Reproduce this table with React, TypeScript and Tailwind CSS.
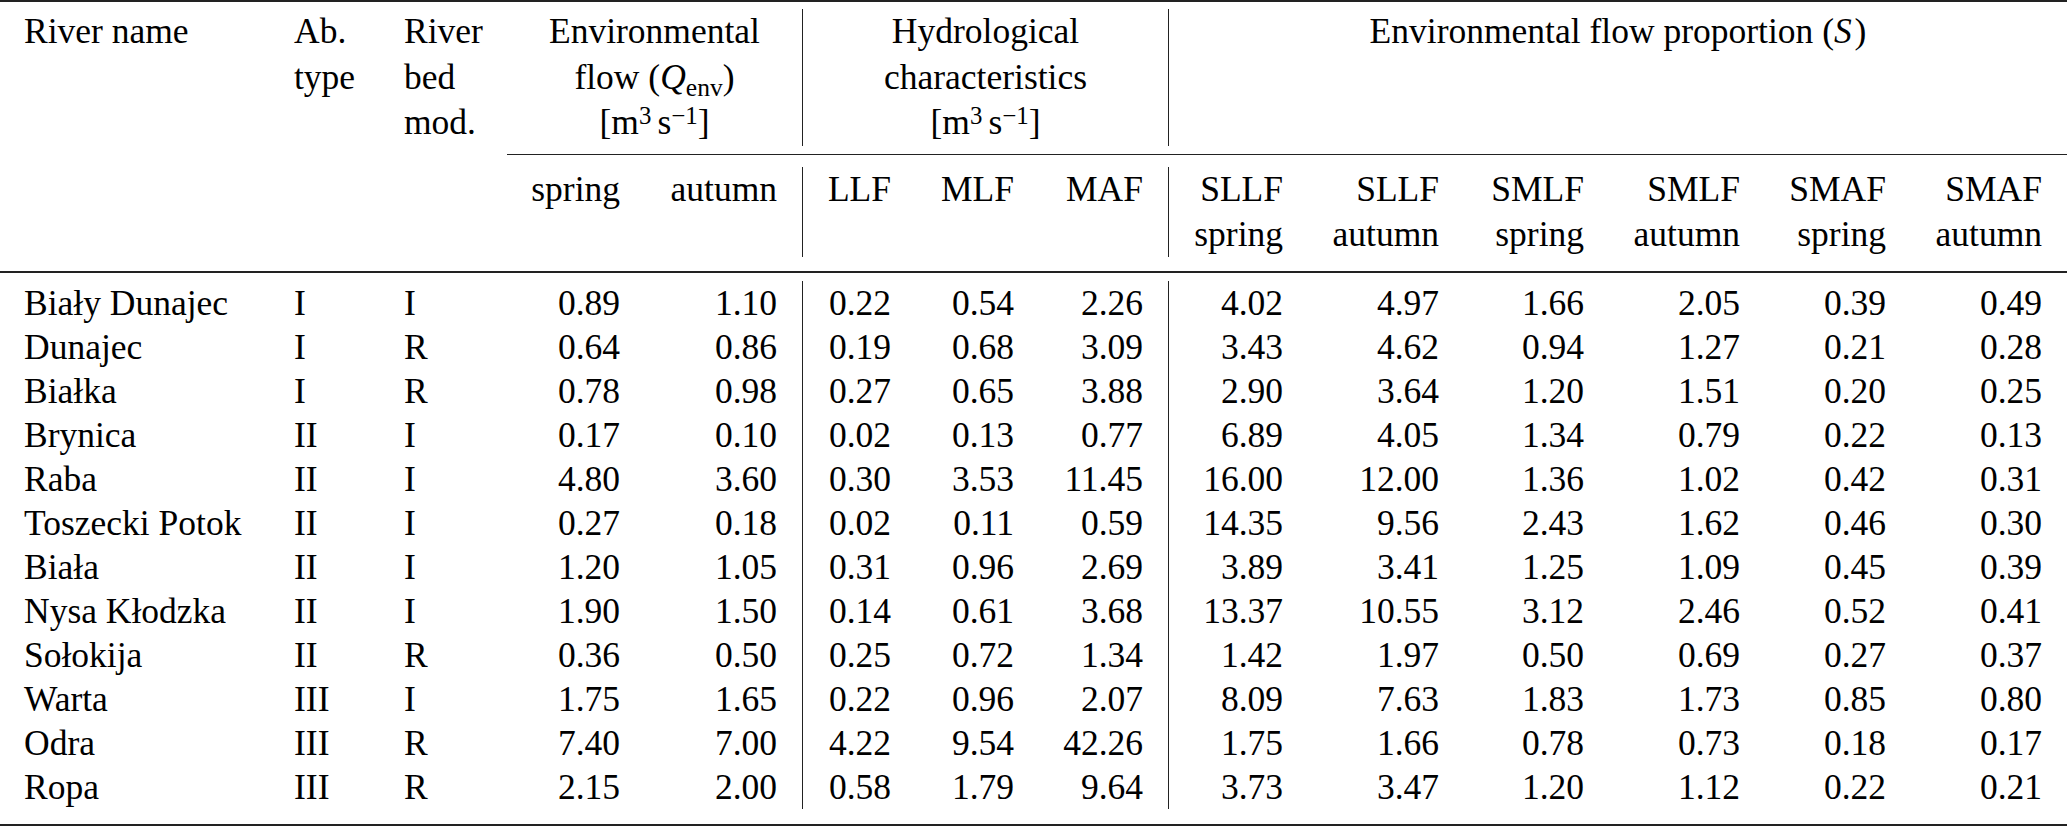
import React from "react";

// column template shared by every block of the table, so vlines line up
const GRID =
  "grid grid-cols-[270px_110px_127px_138px_157px_114px_123px_129px_140px_156px_145px_156px_146px_156px]";
const RULE = "bg-[#222]";
const VLINE = "border-l border-[#222]";

const ROWS: string[][] = [
  ["Biały Dunajec", "I", "I", "0.89", "1.10", "0.22", "0.54", "2.26", "4.02", "4.97", "1.66", "2.05", "0.39", "0.49"],
  ["Dunajec", "I", "R", "0.64", "0.86", "0.19", "0.68", "3.09", "3.43", "4.62", "0.94", "1.27", "0.21", "0.28"],
  ["Białka", "I", "R", "0.78", "0.98", "0.27", "0.65", "3.88", "2.90", "3.64", "1.20", "1.51", "0.20", "0.25"],
  ["Brynica", "II", "I", "0.17", "0.10", "0.02", "0.13", "0.77", "6.89", "4.05", "1.34", "0.79", "0.22", "0.13"],
  ["Raba", "II", "I", "4.80", "3.60", "0.30", "3.53", "11.45", "16.00", "12.00", "1.36", "1.02", "0.42", "0.31"],
  ["Toszecki Potok", "II", "I", "0.27", "0.18", "0.02", "0.11", "0.59", "14.35", "9.56", "2.43", "1.62", "0.46", "0.30"],
  ["Biała", "II", "I", "1.20", "1.05", "0.31", "0.96", "2.69", "3.89", "3.41", "1.25", "1.09", "0.45", "0.39"],
  ["Nysa Kłodzka", "II", "I", "1.90", "1.50", "0.14", "0.61", "3.68", "13.37", "10.55", "3.12", "2.46", "0.52", "0.41"],
  ["Sołokija", "II", "R", "0.36", "0.50", "0.25", "0.72", "1.34", "1.42", "1.97", "0.50", "0.69", "0.27", "0.37"],
  ["Warta", "III", "I", "1.75", "1.65", "0.22", "0.96", "2.07", "8.09", "7.63", "1.83", "1.73", "0.85", "0.80"],
  ["Odra", "III", "R", "7.40", "7.00", "4.22", "9.54", "42.26", "1.75", "1.66", "0.78", "0.73", "0.18", "0.17"],
  ["Ropa", "III", "R", "2.15", "2.00", "0.58", "1.79", "9.64", "3.73", "3.47", "1.20", "1.12", "0.22", "0.21"],
];

// second header row: [top line, bottom line]
const SUBHEAD: [string, string][] = [
  ["spring", ""],
  ["autumn", ""],
  ["LLF", ""],
  ["MLF", ""],
  ["MAF", ""],
  ["SLLF", "spring"],
  ["SLLF", "autumn"],
  ["SMLF", "spring"],
  ["SMLF", "autumn"],
  ["SMAF", "spring"],
  ["SMAF", "autumn"],
];

function Sup({ children }: { children: React.ReactNode }) {
  return <span className="relative -top-[0.4em] text-[0.7em] leading-none">{children}</span>;
}

function Unit() {
  return (
    <>
      [m<Sup>3</Sup>
      <span className="ml-[0.17em]">s</span>
      <Sup>−1</Sup>]
    </>
  );
}

function Gap({ h }: { h: string }) {
  return <div className={h} />;
}

export default function App() {
  return (
    <div className="w-[2067px] h-[828px] overflow-hidden bg-white text-black font-['Liberation_Serif','Times_New_Roman',serif] text-[35.5px]">
      <div className={`h-[2px] ${RULE}`} />
      <Gap h="h-[7px]" />

      {/* group header */}
      <div className={`${GRID} h-[137px] leading-[45.5px]`}>
        <div className="pl-6">River name</div>
        <div className="pl-6">
          <div>Ab.</div>
          <div>type</div>
        </div>
        <div className="pl-6">
          <div>River</div>
          <div>bed</div>
          <div>mod.</div>
        </div>
        <div className="col-span-2 text-center">
          <div>Environmental</div>
          <div>
            flow (<span className="italic">Q</span>
            <span className="relative top-[0.3em] text-[0.72em] leading-none">env</span>)
          </div>
          <div>
            <Unit />
          </div>
        </div>
        <div className={`col-span-3 text-center ${VLINE}`}>
          <div>Hydrological</div>
          <div>characteristics</div>
          <div>
            <Unit />
          </div>
        </div>
        <div className={`col-span-6 text-center ${VLINE}`}>
          Environmental flow proportion (<span className="italic pr-[0.08em]">S</span>)
        </div>
      </div>

      <Gap h="h-[8px]" />
      <div className="flex h-[1px]">
        <div className="w-[507px]" />
        <div className={`flex-1 ${RULE}`} />
      </div>
      <Gap h="h-[12px]" />

      {/* column header */}
      <div className={`${GRID} leading-[45px] h-[90px]`}>
        <div />
        <div />
        <div />
        {SUBHEAD.map(([a, b], i) => (
          <div key={i} className={`pr-[25px] text-right ${i === 2 || i === 5 ? VLINE : ""}`}>
            <div>{a}</div>
            {b && <div>{b}</div>}
          </div>
        ))}
      </div>

      <Gap h="h-[14px]" />
      <div className={`h-[2px] ${RULE}`} />
      <Gap h="h-[8px]" />

      {/* body */}
      <div className="leading-[44px]">
        {ROWS.map((r) => (
          <div key={r[0]} className={GRID}>
            {r.map((v, i) => (
              <div
                key={i}
                className={`${i < 3 ? "pl-6" : "pr-[25px] text-right"} ${i === 5 || i === 8 ? VLINE : ""}`}
              >
                {v}
              </div>
            ))}
          </div>
        ))}
      </div>

      <Gap h="h-[15px]" />
      <div className={`h-[2px] ${RULE}`} />
    </div>
  );
}
